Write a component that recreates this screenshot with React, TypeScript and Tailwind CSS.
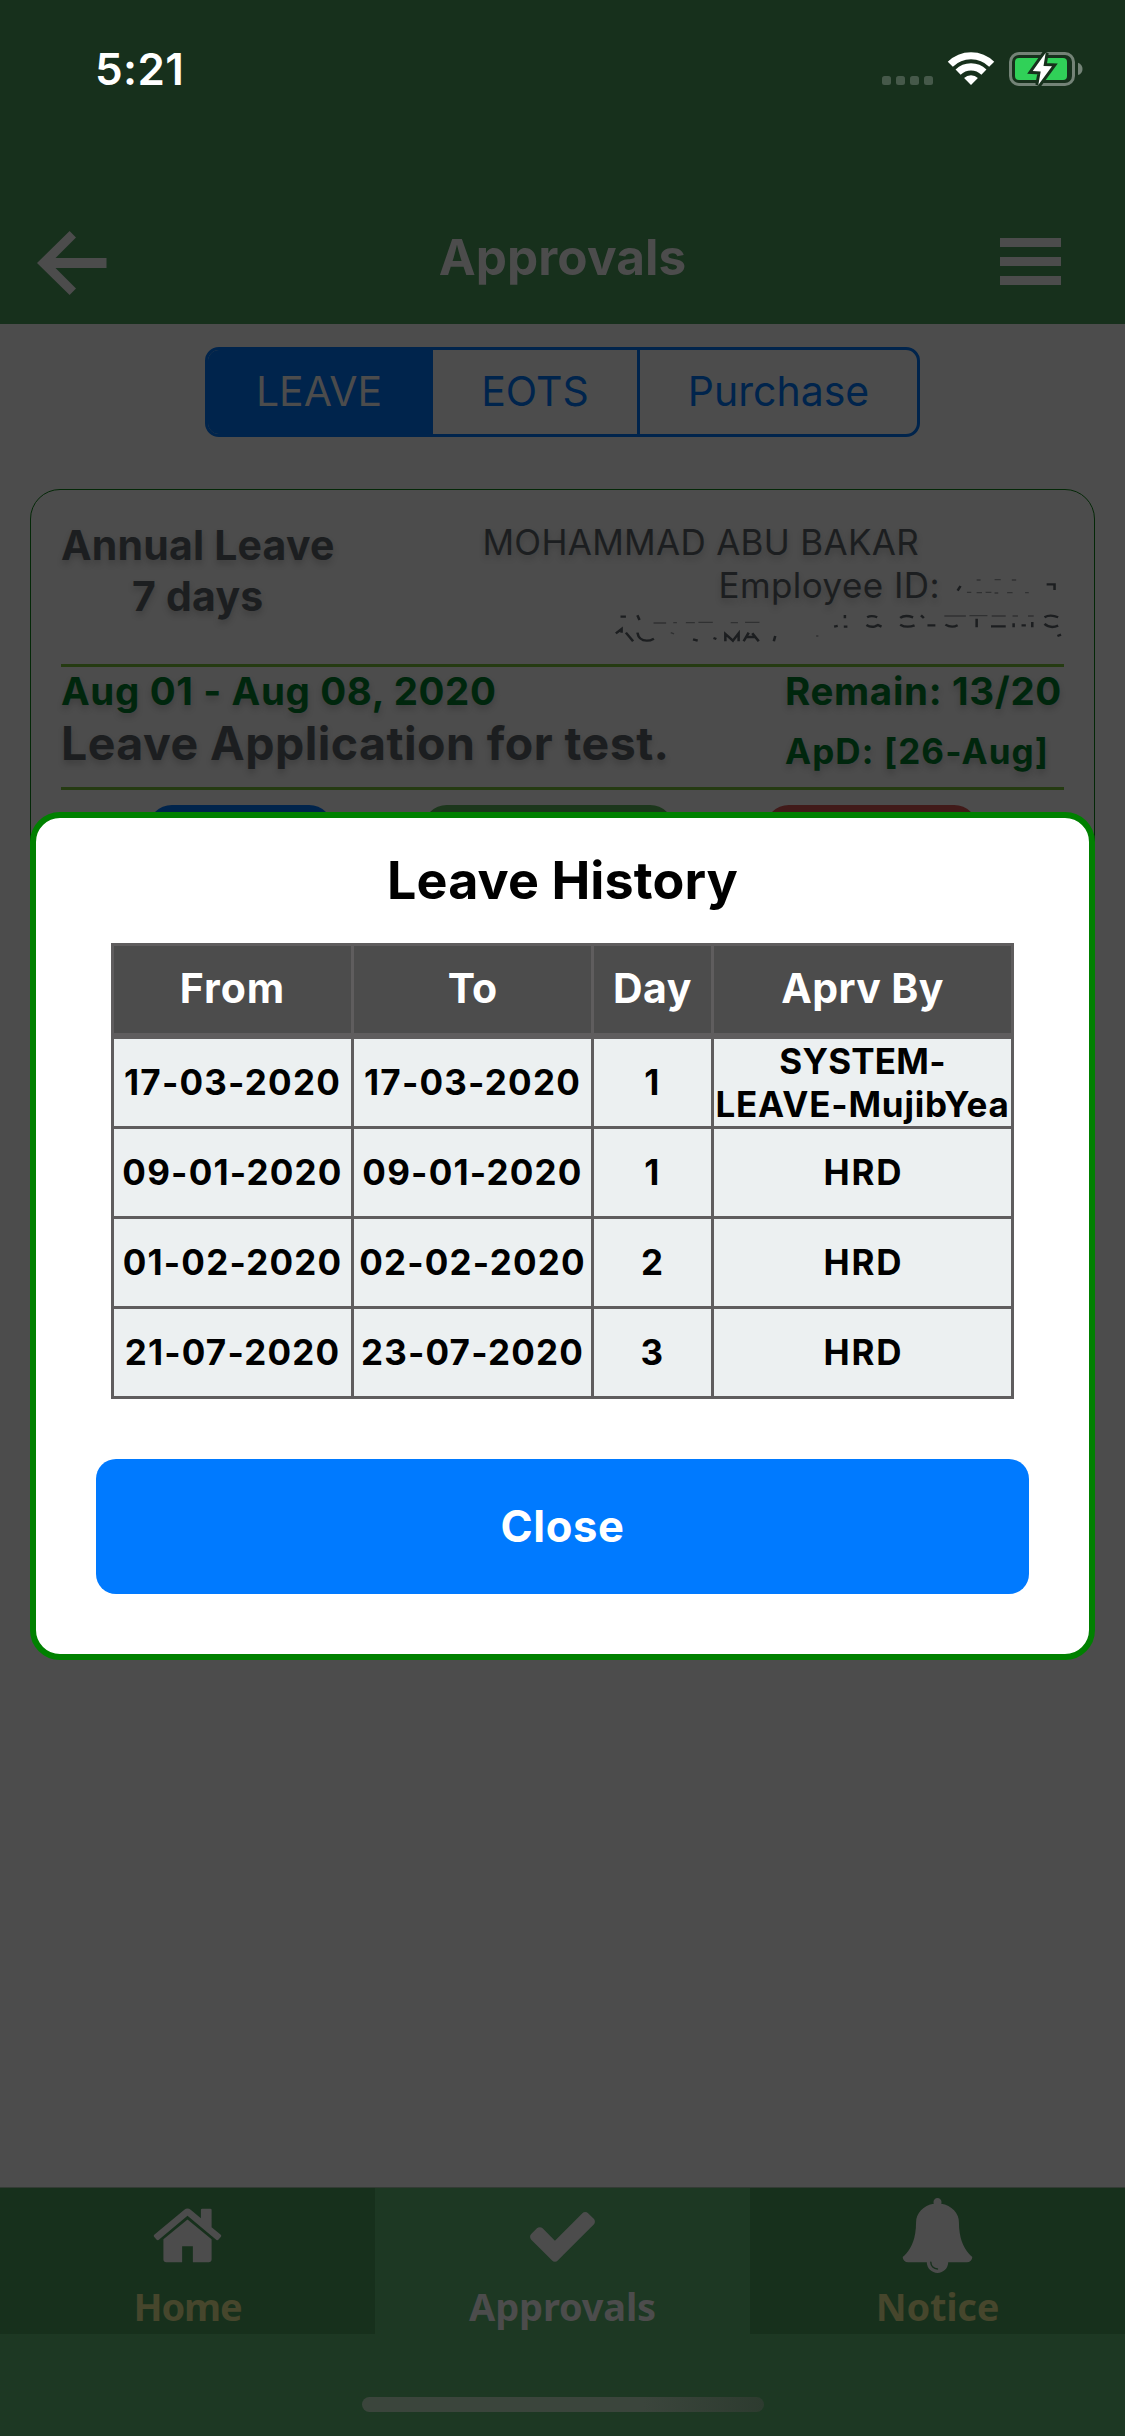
import type { ReactNode } from "react";

function StatusBar() {
  return (
    <div className="flex h-[138px] items-center justify-between pr-[40px] pl-[95px]">
      <span className="text-[44px] leading-[60px] font-semibold tracking-[0.4px] text-white">5:21</span>
      <svg width="205" height="38" viewBox="0 0 205 38" fill="none">
        <g fill="#46594a">
          <rect x="2" y="26" width="9" height="9" rx="2.5" />
          <rect x="16" y="26" width="9" height="9" rx="2.5" />
          <rect x="30" y="26" width="9" height="9" rx="2.5" />
          <rect x="44" y="26" width="9" height="9" rx="2.5" />
        </g>
        <g stroke="#fff" strokeWidth="7.2">
          <path d="M70.3 14.3A29.3 29.3 0 0 1 111.7 14.3" />
          <path d="M78.1 22.1A18.3 18.3 0 0 1 103.9 22.1" />
        </g>
        <path d="M91 35 84.1 28.1A9.7 9.7 0 0 1 97.9 28.1Z" fill="#fff" />
        <rect x="130.5" y="3.5" width="63" height="31" rx="8.5" stroke="#748377" strokeWidth="3" />
        <path d="M198 12.7q4.5 1.8 4.5 6.2t-4.5 6.2z" fill="#748377" />
        <rect x="135" y="8" width="52" height="22" rx="4" fill="#30d158" />
        <path
          d="M165.7 2.7 152.7 21 160.7 21.5 158.3 35 172 16.3 163.5 16Z"
          fill="#fff"
          stroke="#17301c"
          strokeWidth="6"
          paintOrder="stroke"
        />
      </svg>
    </div>
  );
}

function Header() {
  return (
    <header className="h-[324px] bg-[#17301c]">
      <StatusBar />
      <div className="mt-[52px] flex h-[134px] items-center justify-between pr-[64px] pl-[37px]">
        <svg className="mt-[12px]" width="70" height="64" viewBox="0 0 70 64" fill="#4c4c4c">
          <path d="M0 32 32.6 0 39 6.5 18.5 27H69.5V37H18.5L39 57.5 32.6 64Z" />
        </svg>
        <h1 className="pl-[18px] text-[49.5px] leading-[60px] font-bold tracking-[0.1px] text-[#4c4c4c]">Approvals</h1>
        <div className="mt-[9px] flex w-[61px] flex-col gap-[10px]">
          <div className="h-[9px] bg-[#4c4c4c]" />
          <div className="h-[9px] bg-[#4c4c4c]" />
          <div className="h-[9px] bg-[#4c4c4c]" />
        </div>
      </div>
    </header>
  );
}

function Segments() {
  return (
    <div className="mx-auto mt-[23px] flex h-[90px] w-[715px] overflow-hidden rounded-[14px] border-[3px] border-[#00244c] text-[41px] text-[#00244c]">
      <div className="flex w-[225px] items-center justify-center bg-[#00244c] pr-[3px] text-[#4c4c4c]">LEAVE</div>
      <div className="flex w-[204px] items-center justify-center">EOTS</div>
      <div className="flex flex-1 items-center justify-center border-l-[3px] border-[#00244c]">Purchase</div>
    </div>
  );
}

function ErasedText() {
  return (
    <svg className="absolute top-[31px] right-[30px]" width="460" height="129" viewBox="0 0 460 129" fill="none">
      <g transform="matrix(0.359 0 0 0.3333 -42 -191)" stroke="#1c1e20" strokeWidth="7">
        <path d="M1102 782 1110 768M1350 763H1372V780" />
        <path
          d="M150 910 166 897V908M163 860H178M210 856 216 870M178 908 198 934M210 908Q214 932 236 932 246 932 256 926M365 928 378 932M422 924 430 927"
        />
        <path d="M455 934V912L476 932 492 910V934M506 934 520 908M530 910 548 934M514 921H540M590 934 594 918" />
        <path d="M788 855V865M758 890 768 888M785 890H795M850 862Q862 855 878 862M848 885Q860 893 872 889L880 885 890 890" />
        <path d="M942 864Q955 853 978 862M942 884Q960 895 982 886M1000 856 1008 864M1018 886H1040M1068 884Q1085 895 1102 886" />
        <path d="M1155 866V892M1195 889H1236M1258 892V880M1280 886H1292M1310 876V892M1344 862Q1360 852 1382 862M1344 882Q1360 897 1382 887M1380 918 1390 914" />
      </g>
      <g transform="matrix(0.359 0 0 0.3333 -42 -191)" stroke="#303132" strokeWidth="4">
        <path d="M1155 750H1166M1205 749H1222M1253 750H1265M1128 787H1140M1155 788H1170M1180 787H1196M1205 789H1215M1240 788H1255M1290 788H1300" />
        <path d="M255 879H290M310 878H320M345 878H370M380 877H420M470 878H490M510 877H550M303 908 312 912" />
        <path d="M1065 858H1125M1135 857H1185M1197 858H1236M1255 858H1270M1298 858H1314M708 918H714" />
      </g>
    </svg>
  );
}

function LeaveCard() {
  return (
    <section className="relative mx-[30px] mt-[52px] h-[440px] rounded-[30px] border border-[#042807] px-[30px] text-[#1c1e20] [text-shadow:0_4px_6px_rgba(0,0,0,0.18)]">
      <div className="box-content flex h-[174px] justify-between border-b-[3px] border-[#253b12]">
        <div className="pt-[30px] text-center text-[41px] leading-[51px] font-bold tracking-[0.2px]">
          <div>Annual Leave</div>
          <div>7 days</div>
        </div>
        <div className="pt-[31px] text-right text-[35px] leading-[43px] tracking-[0.3px]">
          <div className="pr-[145px]">MOHAMMAD ABU BAKAR</div>
          <div className="pr-[124px] tracking-[0.44px]">Employee ID:</div>
        </div>
      </div>
      <ErasedText />
      <div className="box-content flex h-[120px] justify-between border-b-[3px] border-[#253b12] font-bold">
        <div>
          <div className="text-[38.5px] leading-[49px] tracking-[0.62px] text-[#00260d]">Aug 01 - Aug 08, 2020</div>
          <div className="text-[46.5px] leading-[54px] tracking-[0.44px]">Leave Application for test.</div>
        </div>
        <div className="pr-[2px] text-[#00260d]">
          <div className="text-[38.5px] leading-[49px] tracking-[0.68px]">Remain: 13/20</div>
          <div className="text-[35px] leading-[70px] tracking-[1.1px]">ApD: [26-Aug]</div>
        </div>
      </div>
      <div className="flex pt-[15px] pl-[87px]">
        <div className="h-[96px] w-[185px] rounded-[24px] bg-[#00244c]" />
        <div className="ml-[90px] h-[96px] w-[251px] rounded-[24px] bg-[#1c371c]" />
        <div className="ml-[91px] h-[96px] w-[213px] rounded-[24px] bg-[#411a19]" />
      </div>
    </section>
  );
}

const rows = [
  { from: "17-03-2020", to: "17-03-2020", day: "1", by: ["SYSTEM-", "LEAVE-MujibYea"] },
  { from: "09-01-2020", to: "09-01-2020", day: "1", by: ["HRD"] },
  { from: "01-02-2020", to: "02-02-2020", day: "2", by: ["HRD"] },
  { from: "21-07-2020", to: "23-07-2020", day: "3", by: ["HRD"] },
];

const cell = "flex items-center justify-center border-r-[3px] border-[#5f5d5e]";

function HistoryTable() {
  return (
    <div className="mx-auto mt-[30px] w-[903px] border-[3px] border-[#5f5d5e] bg-[#ecf0f1] text-[35px] leading-[43px] font-bold text-black">
      <div className="box-content grid h-[87px] grid-cols-[240px_240px_120px_297px] border-b-[6px] border-[#5f5d5e] bg-[#4c4c4c] text-[41px] text-white">
        <div className={`${cell} pb-[2px] tracking-[1px]`}>From</div>
        <div className={`${cell} pb-[2px]`}>To</div>
        <div className={`${cell} pb-[2px] tracking-[0.6px]`}>Day</div>
        <div className="flex items-center justify-center pb-[2px] tracking-[0.4px]">Aprv By</div>
      </div>
      {rows.map((r, i) => (
        <div
          key={i}
          className="box-content grid h-[87px] grid-cols-[240px_240px_120px_297px] border-b-[3px] border-[#5f5d5e] tracking-[1.2px] last:border-b-0"
        >
          <div className={cell}>{r.from}</div>
          <div className={cell}>{r.to}</div>
          <div className={cell}>{r.day}</div>
          {r.by.length > 1 ? (
            <div className="flex flex-col items-center justify-center whitespace-nowrap">
              <span className="tracking-[0.2px]">{r.by[0]}</span>
              <span className="tracking-[0.8px]">{r.by[1]}</span>
            </div>
          ) : (
            <div className="flex items-center justify-center pl-[2px] tracking-[1.8px]">{r.by[0]}</div>
          )}
        </div>
      ))}
    </div>
  );
}

function HistoryModal() {
  return (
    <div className="absolute inset-x-0 top-0 px-[30px] pt-[812px]">
      <div className="h-[848px] rounded-[30px] border-[6px] border-[#008000] bg-white pt-[31px]">
        <h2 className="text-center text-[52px] leading-[64px] font-bold tracking-[0.1px] text-black">Leave History</h2>
        <HistoryTable />
        <button className="mx-auto mt-[60px] flex h-[135px] w-[933px] items-center justify-center rounded-[20px] bg-[#007aff] text-[43.5px] font-bold tracking-[0.6px] text-white">
          Close
        </button>
      </div>
    </div>
  );
}

function TabItem({ path, label, className }: { path: ReactNode; label: string; className: string }) {
  return (
    <div className={`flex h-[147px] flex-1 flex-col items-center border-t border-[#333b34] pt-[10px] ${className}`}>
      <svg width="75" height="75" viewBox="0 0 1792 1792" fill="#4c4c4c">
        {path}
      </svg>
      <span className="mt-[8px] text-[38px] leading-[50px]">{label}</span>
    </div>
  );
}

function TabBar() {
  return (
    <nav className="h-[249px] bg-[#1d3823] font-['Noto_Sans',sans-serif] font-bold">
      <div className="flex">
        <TabItem
          label="Home"
          className="bg-[#17301c] tracking-[-1.1px] text-[#46462c]"
          path={
            <path d="M1472 992v480q0 26-19 45t-45 19h-384v-384h-256v384h-384q-26 0-45-19t-19-45v-480q0-1 .5-3t.5-3l575-474 575 474q1 2 1 6zm223-69l-62 74q-8 9-21 11h-3q-13 0-21-7l-692-577-692 577q-12 8-24 7-13-2-21-11l-62-74q-8-10-7-23.5t11-21.5l719-599q32-26 76-26t76 26l244 204v-195q0-14 9-23t23-9h192q14 0 23 9t9 23v408l219 182q10 8 11 21.5t-7 23.5z" />
          }
        />
        <TabItem
          label="Approvals"
          className="bg-[#1d3823] tracking-[-0.17px] text-[#4c4c4c]"
          path={
            <path d="M1671 566q0 40-28 68l-724 724-136 136q-28 28-68 28t-68-28l-136-136-362-362q-28-28-28-68t28-68l136-136q28-28 68-28t68 28l294 295 656-657q28-28 68-28t68 28l136 136q28 28 28 68z" />
          }
        />
        <TabItem
          label="Notice"
          className="bg-[#17301c] tracking-[-0.22px] text-[#46462c]"
          path={
            <path d="M912 1696q0-16-16-16-59 0-101.5-42.5t-42.5-101.5q0-16-16-16t-16 16q0 73 51.5 124.5t124.5 51.5q16 0 16-16zm816-288q0 52-38 90t-90 38h-448q0 106-75 181t-181 75-181-75-75-181h-448q-52 0-90-38t-38-90q50-42 91-88t85-119.5 74.5-158.5 50-206 19.5-260q0-152 117-282.5t307-158.5q-8-19-8-39 0-40 28-68t68-28 68 28 28 68q0 20-8 39 190 28 307 158.5t117 282.5q0 139 19.5 260t50 206 74.5 158.5 85 119.5 91 88z" />
          }
        />
      </div>
      <div className="mx-auto mt-[63px] h-[15px] w-[402px] rounded-full bg-linear-to-r from-[#3b453c] from-70% to-[#2d3b2f]" />
    </nav>
  );
}

export default function App() {
  return (
    <div className="relative flex h-[2436px] w-[1125px] flex-col overflow-hidden bg-[#4c4c4c] font-[Inter,sans-serif]">
      <Header />
      <Segments />
      <LeaveCard />
      <div className="flex-1" />
      <TabBar />
      <HistoryModal />
    </div>
  );
}
